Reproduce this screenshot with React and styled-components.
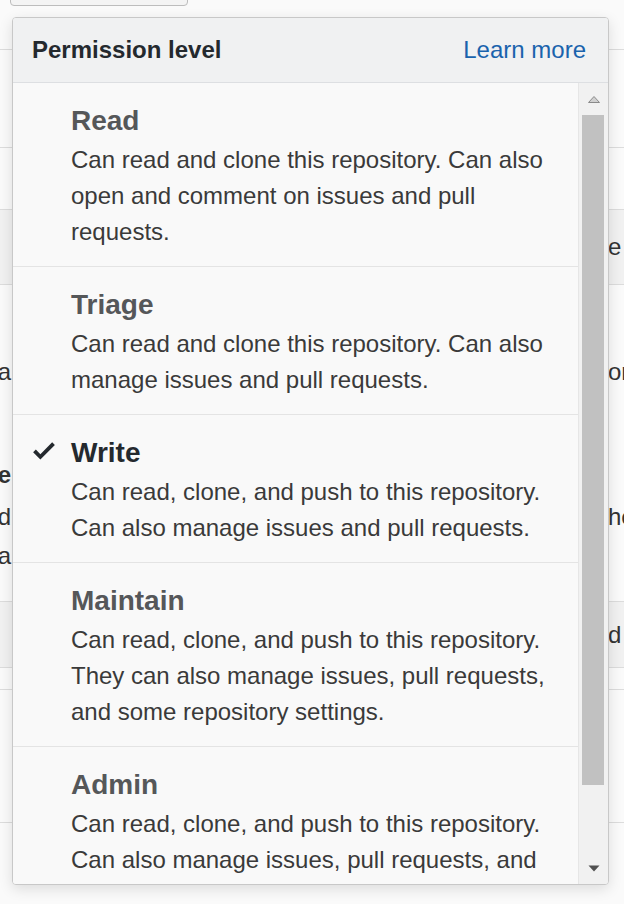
import React from 'react'
import styled, { createGlobalStyle } from 'styled-components'

const GlobalStyle = createGlobalStyle`
    html, body {
        margin: 0;
        padding: 0;
        background: #fafafa;
    }
    body {
        font-family: "Liberation Sans", Arial, sans-serif;
        overflow: hidden;
    }
`

const levels = [
    {
        name: 'Read',
        text: 'Can read and clone this repository. Can also open and comment on issues and pull requests.',
    },
    {
        name: 'Triage',
        text: 'Can read and clone this repository. Can also manage issues and pull requests.',
    },
    {
        name: 'Write',
        text: 'Can read, clone, and push to this repository. Can also manage issues and pull requests.',
        selected: true,
    },
    {
        name: 'Maintain',
        text: 'Can read, clone, and push to this repository. They can also manage issues, pull requests, and some repository settings.',
    },
    {
        name: 'Admin',
        text: 'Can read, clone, and push to this repository. Can also manage issues, pull requests, and repository settings, including adding collaborators.',
    },
]

// rows of the page that sits behind the menu
const pageRows = [
    { h: 50, line: true, top: true },
    { h: 98, line: true },
    { h: 62, line: true },
    { h: 75, line: true, grey: true, right: 'e' },
    { h: 55 },
    { h: 64, left: 'a', right: 'or' },
    { h: 51 },
    { h: 40, left: 're', bold: true },
    { h: 44, left: 'd', right: 'he' },
    { h: 34, left: 'a' },
    { h: 29, line: true },
    { h: 66, line: true, grey: true, right: 'd' },
    { h: 22, line: true },
    { h: 133, line: true },
    { h: 66 },
]

function Check() {
    return (
        <svg width="22" height="29" viewBox="0 0 12 16" fill="#24292e">
            <path d="M12 5l-8 8-4-4 1.5-1.5L4 10l6.5-6.5L12 5z" />
        </svg>
    )
}

function App() {
    return (
        <Page>
            <GlobalStyle />
            {pageRows.map((row, i) => (
                <BgRow key={i} h={row.h} line={row.line} grey={row.grey}>
                    {row.top && <TopButton />}
                    <BgLeft bold={row.bold}>{row.left}</BgLeft>
                    <BgRight>{row.right}</BgRight>
                </BgRow>
            ))}

            <Menu>
                <Header>
                    <HeaderTitle>Permission level</HeaderTitle>
                    <LearnMore href="#">Learn more</LearnMore>
                </Header>
                <Body>
                    <List>
                        {levels.map((level) => (
                            <Item key={level.name}>
                                <IconSlot>{level.selected && <Check />}</IconSlot>
                                <ItemContent>
                                    <ItemTitle selected={level.selected}>{level.name}</ItemTitle>
                                    <ItemText>{level.text}</ItemText>
                                </ItemContent>
                            </Item>
                        ))}
                    </List>
                    <Scrollbar>
                        <ArrowButton>
                            <svg width="12" height="7" viewBox="0 0 12 7">
                                <polygon points="6,0.5 11.5,6.5 0.5,6.5" fill="#d0d0d0" stroke="#8a8a8a" strokeWidth="1" />
                            </svg>
                        </ArrowButton>
                        <Thumb />
                        <Track />
                        <ArrowButton>
                            <svg width="12" height="7" viewBox="0 0 12 7">
                                <polygon points="0.5,0.5 11.5,0.5 6,6.5" fill="#505050" />
                            </svg>
                        </ArrowButton>
                    </Scrollbar>
                </Body>
            </Menu>
        </Page>
    )
}

export default App

const Page = styled.div`
    position: relative;
    width: 624px;
    height: 904px;
    overflow: hidden;
    background: #fafafa;
    color: #333;
    font-size: 24px;
`
const BgRow = styled.div`
    position: relative;
    height: ${(p) => p.h}px;
    box-sizing: border-box;
    display: flex;
    align-items: center;
    background: ${(p) => (p.grey ? '#f1f1f1' : 'transparent')};
    border-bottom: ${(p) => (p.line ? '1px solid #dcdcdc' : 'none')};
`
const TopButton = styled.div`
    position: absolute;
    left: 10px;
    top: -4px;
    width: 178px;
    height: 10px;
    box-sizing: border-box;
    border: 1px solid #bdbdbd;
    border-radius: 0 0 4px 4px;
    background: #f4f4f4;
`
const BgLeft = styled.div`
    width: 11px;
    display: flex;
    justify-content: flex-end;
    white-space: nowrap;
    font-weight: ${(p) => (p.bold ? 700 : 400)};
    color: #333;
`
const BgRight = styled.div`
    margin-left: auto;
    width: 16px;
    white-space: nowrap;
    color: #333;
`
const Menu = styled.div`
    position: absolute;
    left: 12px;
    top: 17px;
    width: 597px;
    height: 868px;
    box-sizing: border-box;
    display: flex;
    flex-direction: column;
    border: 1px solid #c8c8c8;
    border-radius: 4px;
    background: #f9f9f9;
    box-shadow: 0 4px 14px rgba(0, 0, 0, 0.12);
    overflow: hidden;
`
const Header = styled.div`
    height: 65px;
    flex-shrink: 0;
    box-sizing: border-box;
    display: flex;
    align-items: center;
    justify-content: space-between;
    padding: 0 22px 0 19px;
    background: #f0f1f2;
    border-bottom: 1px solid #dddfe2;
`
const HeaderTitle = styled.span`
    font-size: 24px;
    font-weight: 700;
    color: #24292e;
`
const LearnMore = styled.a`
    font-size: 24px;
    color: #1a63ad;
    text-decoration: none;
`
const Body = styled.div`
    flex: 1;
    display: flex;
    min-height: 0;
`
const List = styled.div`
    flex: 1;
    overflow: hidden;
`
const Item = styled.div`
    display: flex;
    padding: 17px 14px 16px 20px;
    border-bottom: 1px solid #e4e4e4;
    background: #f9f9f9;
`
const IconSlot = styled.div`
    width: 38px;
    flex-shrink: 0;
    padding-top: 4px;
`
const ItemContent = styled.div`
    flex: 1;
    display: flex;
    flex-direction: column;
`
const ItemTitle = styled.span`
    font-size: 28px;
    line-height: 42px;
    font-weight: 700;
    color: ${(p) => (p.selected ? '#24292e' : '#555759')};
`
const ItemText = styled.span`
    font-size: 24px;
    line-height: 36px;
    color: #3a3a3a;
`
const Scrollbar = styled.div`
    width: 30px;
    flex-shrink: 0;
    display: flex;
    flex-direction: column;
    background: #f1f1f1;
    border-left: 1px solid #e6e6e6;
    box-sizing: border-box;
`
const ArrowButton = styled.div`
    height: 32px;
    flex-shrink: 0;
    display: flex;
    align-items: center;
    justify-content: center;
`
const Thumb = styled.div`
    height: 670px;
    flex-shrink: 0;
    margin: 0 4px 0 3px;
    background: #c1c1c1;
`
const Track = styled.div`
    flex: 1;
`
